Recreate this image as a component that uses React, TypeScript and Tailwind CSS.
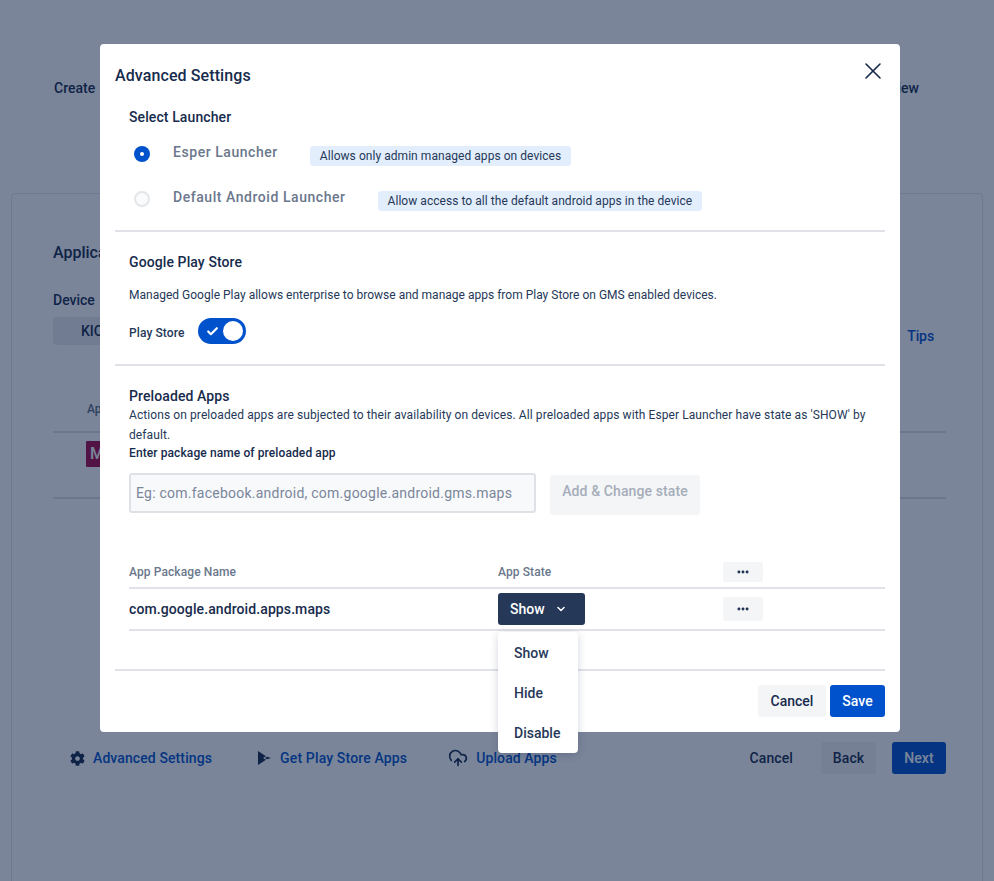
import { Check, ChevronDown, CloudUpload, Ellipsis, X } from 'lucide-react'
import { FaCog } from 'react-icons/fa'

const font = { fontFamily: '"Roboto", "Liberation Sans", sans-serif' }

function Divider({ className = 'bg-[#e1e1e8]' }: { className?: string }) {
  return <div className={`h-[2px] ${className}`} />
}

function Chip({ text, className = '' }: { text: string; className?: string }) {
  return (
    <span
      className={`mt-[6px] flex h-5 items-center rounded-[3px] bg-[#e3eefd] px-[10px] text-[12px] tracking-[0.05px] text-[#253858] ${className}`}
    >
      {text}
    </span>
  )
}

function MoreButton({ className = '' }: { className?: string }) {
  return (
    <button className={`flex w-10 items-center justify-center rounded-[3px] bg-[#f4f5f7] text-[#172b4d] ${className}`}>
      <Ellipsis size={14} strokeWidth={3} />
    </button>
  )
}

function Background() {
  return (
    <div className="h-[881px] overflow-hidden bg-white px-[11px] text-[#172b4d]">
      <div className="flex h-[193px] justify-between pl-[43px] pr-[64px] pt-[79px] text-[14px] font-medium leading-[18px]">
        <span>Create</span>
        <span>Review</span>
      </div>
      <div className="h-[700px] rounded-[4px] border border-[#e4e6ea] pl-[41px] pr-[36px] pt-[49px]">
        <div className="text-[16px] font-medium leading-5">Application</div>
        <div className="mt-[29px] text-[14px] font-medium leading-4">Device</div>
        <div className="mt-[9px] flex items-start justify-between">
          <div className="flex h-[28px] w-[160px] items-center rounded-[4px] bg-[#ebecf0] pl-7 text-[14px] font-medium">KIOSK</div>
          <span className="mr-[12px] mt-[11px] text-[14px] font-medium leading-4 tracking-[-0.1px] text-[#0052cc]">Tips</span>
        </div>
        <div className="mt-[56px] pl-[34px] text-[12px] font-medium leading-4 text-[#5e6c84]">App</div>
        <Divider className="mt-[14px] bg-[#dfe1e6]" />
        <div className="flex h-[64px] items-start pl-[33px] pt-2">
          <div className="flex h-[26px] w-[40px] items-center rounded-[1px] bg-[#a80848] pl-1 text-[16px] font-medium text-white">M</div>
        </div>
        <Divider className="bg-[#dfe1e6]" />
        <div className="mt-[243px] flex items-center text-[14px] font-medium tracking-[0.1px]">
          <FaCog className="ml-[17px] size-[15px]" />
          <span className="ml-[8px] text-[#0052cc]">Advanced Settings</span>
          <svg viewBox="0 0 16 16" className="ml-[45px] size-[16px]" fill="#172b4d">
            <path d="M1 1 L9 6.2 L6 8 L9 9.8 L1 15 Z" />
            <path d="M10 6.8 L14 8 L10 9.2 L8 8 Z" />
          </svg>
          <span className="ml-[7px] tracking-[0.15px] text-[#0052cc]">Get Play Store Apps</span>
          <CloudUpload size={20} strokeWidth={2} className="ml-[41px]" />
          <span className="ml-[8px] text-[#0052cc]">Upload Apps</span>
          <span className="ml-auto mr-[28px]">Cancel</span>
          <span className="flex h-8 w-[55px] items-center justify-center rounded-[3px] bg-[#f4f5f7]">Back</span>
          <span className="ml-4 flex h-8 w-[54px] items-center justify-center rounded-[3px] bg-[#0052cc] text-white">Next</span>
        </div>
      </div>
    </div>
  )
}

export default function App() {
  return (
    <div className="relative h-[881px] w-[994px] overflow-hidden" style={font}>
      <Background />
      <div className="absolute inset-0 bg-[#091e42]/54" />

      <div className="absolute left-[100px] top-[44px] h-[688px] w-[800px] rounded-[4px] bg-white px-[15px] text-[#172b4d]">
        <div className="flex h-[50px] items-start justify-between">
          <h2 className="mt-[22px] text-[16px] font-medium leading-5 tracking-[0.1px] text-[#172b4d]">Advanced Settings</h2>
          <button className="-mr-[2px] mt-[13px]">
            <X size={28} strokeWidth={1.4} />
          </button>
        </div>

        <div className="h-[136px] pl-[14px] pt-[14px]">
          <div className="text-[14px] font-medium leading-[18px] tracking-[0.1px]">Select Launcher</div>
          <div className="mt-[17px] flex h-5 items-center">
            <span className="ml-[5px] mt-[2px] flex size-[16px] items-center justify-center rounded-full bg-[#0052cc]">
              <span className="size-[4px] rounded-full bg-white" />
            </span>
            <span className="ml-[23px] -translate-y-[1px] text-[14px] font-medium tracking-[0.55px] text-[#6b778c]">Esper Launcher</span>
            <Chip text="Allows only admin managed apps on devices" className="ml-[32px]" />
          </div>
          <div className="mt-[25px] flex h-5 items-center">
            <span className="ml-[5px] mt-[2px] size-[16px] rounded-full border-2 border-[#e4e6ea] bg-[#fafbfc]" />
            <span className="ml-[23px] -translate-y-[1px] text-[14px] font-medium tracking-[0.55px] text-[#6b778c]">Default Android Launcher</span>
            <Chip text="Allow access to all the default android apps in the device" className="ml-[32px]" />
          </div>
        </div>
        <Divider />

        <div className="h-[132px] pl-[14px] pt-[21px]">
          <div className="text-[14px] font-medium leading-[18px] tracking-[0.1px]">Google Play Store</div>
          <p className="mt-[16px] text-[12px] leading-4 tracking-[0.01px] text-[#253858]">
            Managed Google Play allows enterprise to browse and manage apps from Play Store on GMS enabled devices.
          </p>
          <div className="mt-[15px] flex h-[26px] items-center">
            <span className="mt-[4px] text-[12px] font-medium tracking-[0.1px] text-[#253858]">Play Store</span>
            <span className="ml-[14px] flex h-[26px] w-[48px] items-center justify-between rounded-full bg-[#0052cc] pl-[8px] pr-[3px]">
              <Check size={13} strokeWidth={4} className="text-white" />
              <span className="size-[20px] rounded-full bg-white" />
            </span>
          </div>
        </div>
        <Divider />

        <div className="h-[303px] pt-[21px]">
          <div className="pl-[14px]">
            <div className="text-[14px] font-medium leading-[18px] tracking-[0.1px]">Preloaded Apps</div>
            <p className="text-[12px] leading-5 tracking-[0.09px] text-[#253858]">
              Actions on preloaded apps are subjected to their availability on devices. All preloaded apps with Esper Launcher have state as 'SHOW' by default.
            </p>
            <div className="text-[12px] font-medium leading-4 tracking-[0.1px]">Enter package name of preloaded app</div>
            <div className="mt-[12px] flex items-start">
              <input
                readOnly
                placeholder="Eg: com.facebook.android, com.google.android.gms.maps"
                className="h-[40px] w-[407px] rounded-[3px] border-2 border-[#dfe1e6] bg-[#f8f9fb] px-[5px] text-[14px] tracking-[0.24px] placeholder:text-[#7a869a]"
              />
              <button className="ml-[14px] mt-[2px] h-[40px] w-[150px] rounded-[3px] bg-[#f4f5f7] pb-[8px] text-[14px] font-medium tracking-[0.1px] text-[#a5adba]">
                Add &amp; Change state
              </button>
            </div>
          </div>

          <div className="mt-[48px] flex h-[24px] items-start pl-[14px]">
            <span className="mt-[1px] w-[369px] text-[12px] font-medium leading-4 tracking-[0.1px] text-[#6b778c]">App Package Name</span>
            <span className="mt-[1px] w-[225px] text-[12px] font-medium leading-4 tracking-[0.1px] text-[#6b778c]">App State</span>
            <MoreButton className="-mt-[1px] h-5" />
          </div>
          <Divider className="ml-[14px] bg-[#e1e1e8]" />
          <div className="relative flex h-[40px] items-center pl-[14px]">
            <span className="w-[369px] text-[14px] font-medium tracking-[0.1px]">com.google.android.apps.maps</span>
            <div className="w-[225px]">
              <button className="flex h-[32px] w-[87px] items-center rounded-[3px] bg-[#253858] pl-3 text-[14px] font-medium text-white">
                Show
                <ChevronDown size={12} strokeWidth={3} className="ml-[10px]" />
              </button>
            </div>
            <MoreButton className="h-6" />
            <div className="absolute left-[383px] top-[43px] z-10 flex h-[121px] w-[80px] flex-col rounded-[4px] bg-white pl-4 pt-[1px] text-[14px] font-medium text-[#253858] shadow-[0_2px_8px_rgba(9,30,66,0.18)]">
              <span className="flex h-10 items-center">Show</span>
              <span className="flex h-10 items-center">Hide</span>
              <span className="flex h-10 items-center">Disable</span>
            </div>
          </div>
          <Divider className="ml-[14px] bg-[#e1e1e8]" />
          <div className="h-[38px]" />
          <Divider />
          <div className="mt-[14px] flex justify-end text-[14px] font-medium">
            <button className="h-8 w-[68px] rounded-[3px] bg-[#f4f5f7]">Cancel</button>
            <button className="ml-1 h-8 w-[55px] rounded-[3px] bg-[#0052cc] text-white">Save</button>
          </div>
        </div>
      </div>
    </div>
  )
}
